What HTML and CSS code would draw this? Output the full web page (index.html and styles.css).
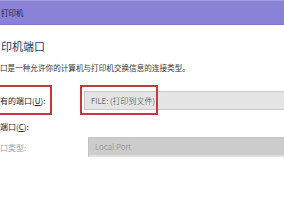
FILE: index.html
```html
<!DOCTYPE html>
<html>
<head>
<meta charset="utf-8">
<link rel="stylesheet" href="styles.css">
</head>
<body>
<div class="titlebar"><span class="title">打印机</span></div>
<div class="content">
  <h1 class="heading">印机端口</h1>
  <p class="desc">口是一种允许你的计算机与打印机交换信息的连接类型。</p>
  <div class="row row-existing">
    <span class="label">有的端口(<u>U</u>):</span>
    <div class="combo">FILE: (打印到文件)</div>
    <div class="mark mark-label"></div>
    <div class="mark mark-combo"></div>
  </div>
  <div class="row row-new">
    <span class="label">端口(<u>C</u>):</span>
  </div>
  <div class="row row-type">
    <span class="label disabled">口类型:</span>
    <div class="combo combo-disabled">Local Port</div>
  </div>
</div>
</body>
</html>
```
FILE: styles.css
```css
html, body {
  margin: 0;
  padding: 0;
  background: #ffffff;
  overflow: hidden;
}
body {
  width: 284px;
  height: 215px;
  font-family: "Noto Sans CJK SC", "Noto Sans", sans-serif;
  color: #262626;
}
.titlebar {
  height: 23px;
  background: #8a82d6;
  border-top: 1px solid #a59ee2;
  border-bottom: 1px solid #7e76c9;
  display: flex;
  align-items: center;
}
.title {
  font-size: 7.5px;
  color: #1e1a3c;
  padding-left: 1px;
}
.content {
  padding-top: 13px;
}
.heading {
  margin: 0;
  font-size: 11px;
  font-weight: normal;
  color: #1d3a72;
  line-height: 16px;
  padding-left: 1px;
}
.desc {
  margin: 8px 0 0 0;
  font-size: 7.6px;
  line-height: 11px;
  color: #333;
}
.row {
  display: grid;
  grid-template-columns: 84px 1fr;
  align-items: center;
  font-size: 8px;
  position: relative;
}
.label u {
  text-decoration: underline;
}
.row-existing {
  height: 30px;
  margin-top: 12px;
}
.combo {
  height: 17px;
  background: #e4e4e4;
  border: 1px solid #c9c9c9;
  border-right: none;
  display: flex;
  align-items: center;
  padding-left: 6px;
  color: #333;
  font-size: 8px;
  font-weight: 300;
}
.mark {
  position: absolute;
  border: 2.5px solid #c03a3e;
  box-sizing: border-box;
}
.mark-label {
  left: -3px;
  top: 0;
  width: 55px;
  height: 30px;
}
.mark-combo {
  left: 80px;
  top: 0;
  width: 78px;
  height: 30px;
}
.row-new {
  height: 14px;
  margin-top: 4px;
}
.row-type {
  height: 18px;
  margin-top: 4px;
}
.disabled {
  color: #a0a0a0;
}
.combo-disabled {
  margin-left: 4px;
  background: #cccccc;
  border-color: #c4c4c4;
  color: #8a8a8a;
  border-bottom: 2px solid #e0e0e0;
}
```
